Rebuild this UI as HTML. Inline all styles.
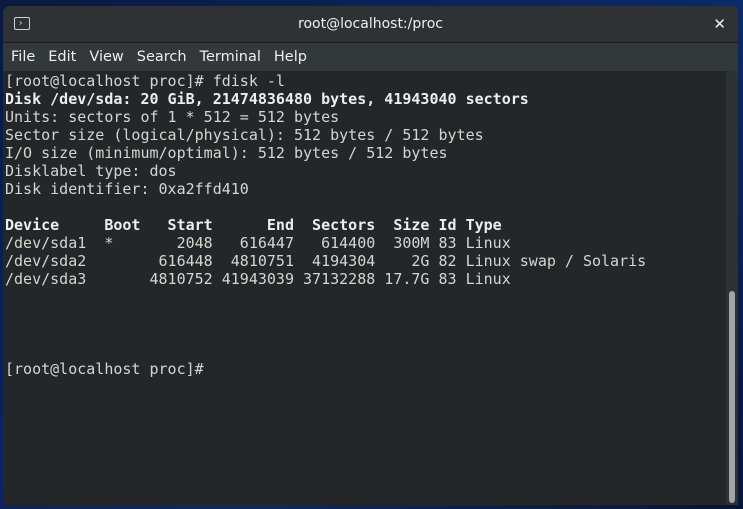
<!DOCTYPE html>
<html><head><style>
body{margin:0;width:743px;height:509px;overflow:hidden;background:linear-gradient(135deg,#0a1a40,#0b2a6a 60%,#06153a);font-family:"DejaVu Sans","Liberation Sans",sans-serif;}
.win{position:absolute;left:3px;top:6px;width:735px;height:499px;background:#2b2f31;border-radius:7px 7px 0 0;overflow:hidden;}
.title{height:36px;background:#2e3235;border-bottom:1px solid #1a1c1e;color:#eeeeec;font-size:14px;text-align:center;line-height:36px;position:relative;}
.ico{position:absolute;left:11px;top:11px;width:14px;height:11px;border:1px solid #cfd2d0;border-radius:2px;}
.ico:after{content:"";position:absolute;left:3px;top:3px;width:3px;height:3px;border-right:1px solid #cfd2d0;border-bottom:1px solid #cfd2d0;transform:rotate(-45deg) scale(.7);}
.x{position:absolute;right:12px;top:0;font-size:15px;font-weight:bold;color:#eee;}
.menu{height:28px;background:#33383b;color:#eeeeec;font-size:14.5px;line-height:28px;padding-left:8px;word-spacing:0;}
.menu span{margin-right:13px;}
.term{position:absolute;left:0;top:65px;width:723px;height:434px;background:#232729;}
pre{margin:0;padding:1px 0 0 2px;font-family:"DejaVu Sans Mono","Liberation Mono",monospace;font-size:15px;line-height:18px;color:#d3d7cf;}
b{color:#eeeeec;}
.sb{position:absolute;left:723px;top:65px;width:12px;height:434px;background:#2c3133;}
.th{position:absolute;left:3px;top:220px;width:6px;height:212px;background:#a3a5a4;border-radius:3px;}
</style></head><body>
<div class="win">
<div class="title"><div class="ico"></div>root@localhost:/proc<span class="x">✕</span></div>
<div class="menu"><span>File</span><span>Edit</span><span>View</span><span>Search</span><span>Terminal</span><span>Help</span></div>
<div class="term"><pre>[root@localhost proc]# fdisk -l
<b>Disk /dev/sda: 20 GiB, 21474836480 bytes, 41943040 sectors</b>
Units: sectors of 1 * 512 = 512 bytes
Sector size (logical/physical): 512 bytes / 512 bytes
I/O size (minimum/optimal): 512 bytes / 512 bytes
Disklabel type: dos
Disk identifier: 0xa2ffd410

<b>Device     Boot   Start      End  Sectors  Size Id Type</b>
/dev/sda1  *       2048   616447   614400  300M 83 Linux
/dev/sda2        616448  4810751  4194304    2G 82 Linux swap / Solaris
/dev/sda3       4810752 41943039 37132288 17.7G 83 Linux




[root@localhost proc]# </pre></div>
<div class="sb"><div class="th"></div></div>
</div>
</body></html>
